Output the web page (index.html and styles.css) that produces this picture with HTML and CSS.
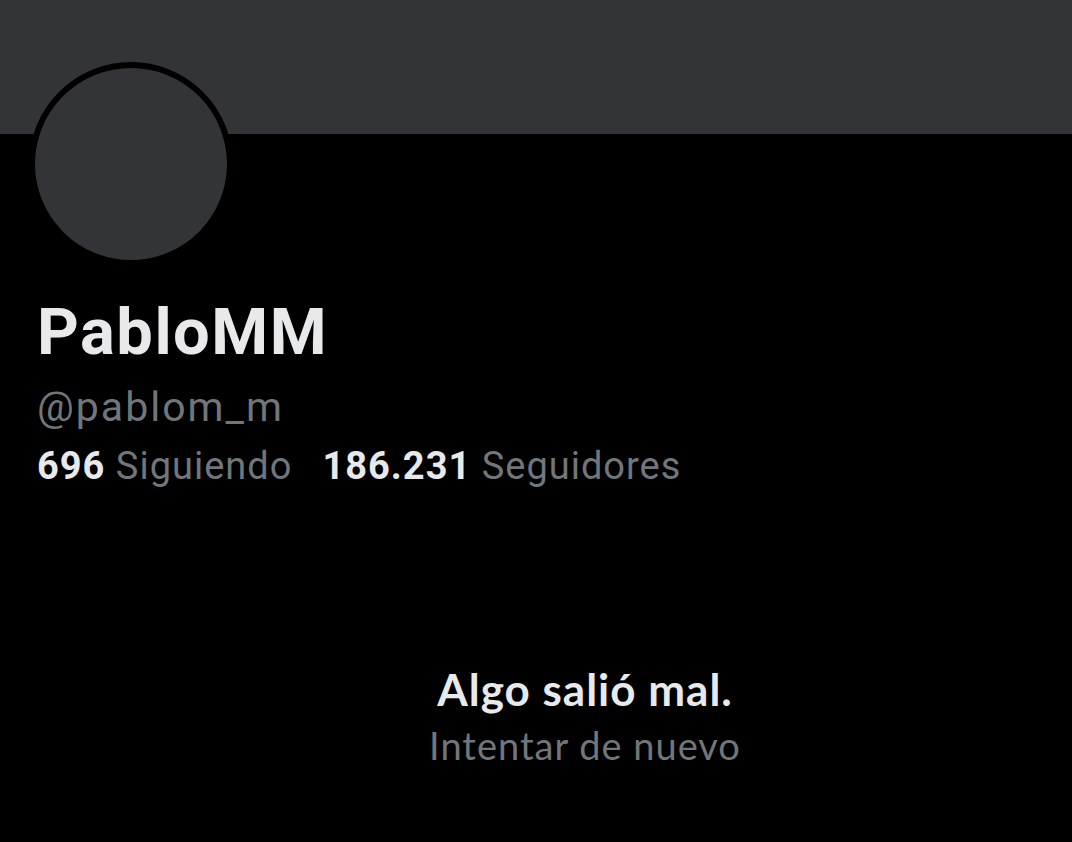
FILE: index.html
```html
<!DOCTYPE html>
<html lang="es">
<head>
  <meta charset="UTF-8" />
  <meta name="viewport" content="width=device-width, initial-scale=1.0"/>
  <title>PabloMM (@pablom_m)</title>
  <link rel="stylesheet" href="styles.css">
</head>
<body>

  <!-- Banner -->
  <div class="banner"></div>

  <!-- Profile info -->
  <section class="profile">
    <div class="avatar-row">
      <div class="avatar"></div>
    </div>
    <h1 class="name">PabloMM</h1>
    <div class="handle">@pablom_m</div>
    <div class="stats">
      <span><strong>696</strong> Siguiendo</span>
      <span><strong>186.231</strong> Seguidores</span>
    </div>
  </section>

  <!-- Error message -->
  <div class="error">
    <div class="error-title">Algo salió mal.</div>
    <div class="error-retry">Intentar de nuevo</div>
  </div>

</body>
</html>
```

FILE: styles.css
```css
body {
  margin: 0;
  padding: 0;
  background-color: #000;
  color: #e7e9ea;
  font-family: Roboto, 'Noto Sans', sans-serif;
  height: 842px;
  overflow: hidden;
}

.banner {
  height: 134px;
  background-color: #333438;
}

.profile {
  padding: 0 37px;
}

.avatar-row {
  margin-top: -72px;
  margin-left: -8px;
  height: 231px;
}

.avatar {
  width: 192px;
  height: 192px;
  border: 6px solid #000;
  border-radius: 50%;
  background-color: #333438;
}

.name {
  margin: 0;
  font-size: 65px;
  font-weight: 700;
  line-height: 78px;
  letter-spacing: 1.5px;
  color: #e7e9ea;
}

.handle {
  margin-top: 12px;
  font-size: 41px;
  line-height: 48px;
  letter-spacing: 2px;
  color: #71767b;
}

.stats {
  margin-top: 12px;
  font-size: 38px;
  line-height: 46px;
  letter-spacing: 1px;
  color: #71767b;
  display: flex;
  gap: 30px;
}

.stats strong {
  color: #e7e9ea;
  font-weight: 700;
}

.error {
  margin-top: 174px;
  padding-left: 98px;
  text-align: center;
  font-family: Lato, Roboto, sans-serif;
}

.error-title {
  font-size: 44px;
  font-weight: 700;
  line-height: 52px;
  letter-spacing: 1px;
  color: #e7e9ea;
}

.error-retry {
  margin-top: 7px;
  font-size: 38px;
  line-height: 46px;
  letter-spacing: 1px;
  color: #71767b;
}
```
